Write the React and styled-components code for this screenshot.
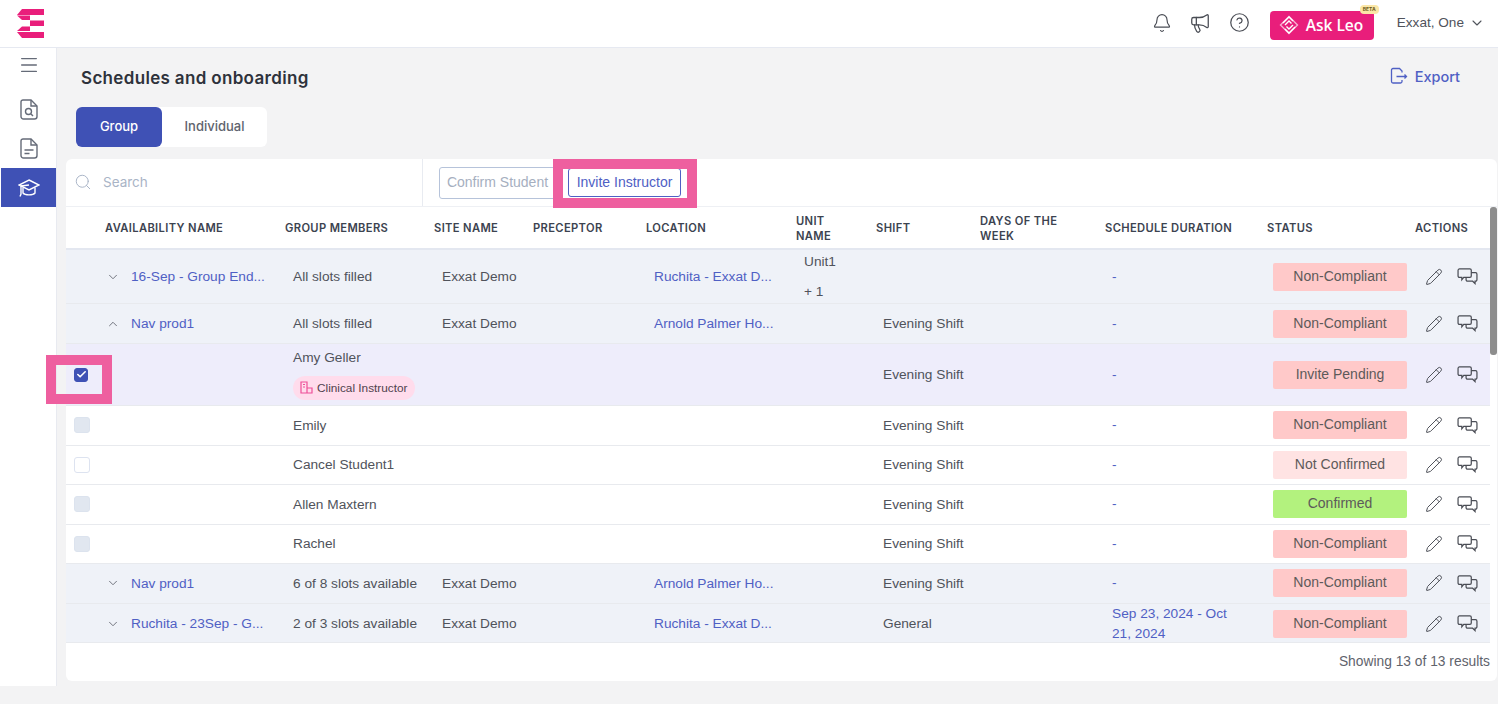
import React from "react";
import styled, { createGlobalStyle } from "styled-components";
import {
  Bell,
  ChevronDown,
  ChevronUp,
  CircleHelp,
  Megaphone,
  Menu,
  Pencil,
  Search,
  Check,
} from "lucide-react";

const GlobalStyle = createGlobalStyle`
  html, body {
    margin: 0;
    padding: 0;
    background: #f3f3f4;
    font-family: "Liberation Sans", Arial, sans-serif;
  }
  * { box-sizing: border-box; }
`;

const GRID = "211px 149px 99px 113px 150px 80px 104px 125px 162px 148px 83px";
const LINK = "#4f60c4";

const Page = styled.div`
  width: 1498px;
  height: 704px;
  overflow: hidden;
  position: relative;
`;

const TopBar = styled.header`
  height: 48px;
  background: #fff;
  border-bottom: 1px solid #e6e9f1;
  display: flex;
  align-items: center;
  padding: 0 13px 0 17px;
`;

const TopRight = styled.div`
  margin-left: auto;
  display: flex;
  align-items: center;
  color: #4a4d55;
`;

const IconSlot = styled.span`
  display: flex;
  margin-right: ${(p) => p.$gap}px;
  margin-bottom: 2px;
`;

const AskLeo = styled.div`
  position: relative;
  width: 104px;
  height: 29px;
  margin-top: 3px;
  background: #e91e7b;
  border-radius: 4px;
  color: #fff;
  display: flex;
  align-items: center;
  padding-left: 9px;
  gap: 7px;
  font-family: "Open Sans", sans-serif;
  font-weight: 600;
  font-size: 15.5px;
  margin-right: 23px;
`;

const Beta = styled.span`
  position: absolute;
  top: -6px;
  right: -5px;
  height: 9px;
  padding: 0 3px;
  background: #fbe7a6;
  border-radius: 4px;
  color: #6b5a20;
  font-size: 5px;
  line-height: 9px;
  font-weight: 700;
  font-family: "Inter", sans-serif;
`;

const UserName = styled.div`
  display: flex;
  align-items: center;
  gap: 5px;
  font-size: 13.6px;
  color: #50535b;
  margin-bottom: 2px;
`;

const Body = styled.div`
  display: flex;
  height: 638px;
`;

const Sidebar = styled.nav`
  width: 57px;
  background: #fff;
  border-right: 1px solid #e8eaf0;
  padding: 0 0 0 1px;
  display: flex;
  flex-direction: column;
`;

const SideItem = styled.div`
  height: ${(p) => p.$h || 39}px;
  display: flex;
  align-items: center;
  justify-content: center;
  color: ${(p) => (p.$active ? "#fff" : "#656b78")};
  background: ${(p) => (p.$active ? "#3f51b5" : "transparent")};
  margin-bottom: ${(p) => p.$mb || 0}px;
`;

const Main = styled.main`
  flex: 1;
  padding: 0 0 5px 9px;
  display: flex;
  flex-direction: column;
  min-width: 0;
`;

const HeadRow = styled.div`
  height: 59px;
  display: flex;
  align-items: center;
  padding: 1px 38px 0 15px;
`;

const Title = styled.h1`
  margin: 0;
  font-family: "Inter", sans-serif;
  font-weight: 600;
  font-size: 17px;
  letter-spacing: 0.33px;
  color: #2e323b;
`;

const ExportLink = styled.div`
  margin-left: auto;
  margin-bottom: 4px;
  display: flex;
  align-items: center;
  gap: 7px;
  color: ${LINK};
  font-family: "Inter", sans-serif;
  font-weight: 500;
  font-size: 14.5px;
`;

const Tabs = styled.div`
  margin-left: 10px;
  width: 191px;
  height: 40px;
  background: #fff;
  border-radius: 6px;
  display: flex;
  font-family: "Inter", sans-serif;
  font-size: 13px;
`;

const Tab = styled.div`
  width: ${(p) => (p.$active ? 86 : 105)}px;
  display: flex;
  align-items: center;
  justify-content: center;
  padding-bottom: 2px;
  border-radius: 6px;
  font-weight: 500;
  color: ${(p) => (p.$active ? "#fff" : "#60646e")};
  background: ${(p) => (p.$active ? "#3f51b5" : "transparent")};
`;

const Card = styled.section`
  margin-top: 12px;
  flex: 1;
  background: #fff;
  border-radius: 6px;
  margin-right: 1px;
  position: relative;
  overflow: hidden;
  display: flex;
  flex-direction: column;
`;

const Toolbar = styled.div`
  height: 48px;
  display: flex;
  align-items: stretch;
  border-bottom: 1px solid #eef0f4;
`;

const SearchBox = styled.div`
  width: 357px;
  border-right: 1px solid #e8ebf1;
  display: flex;
  align-items: center;
  padding: 0 0 2px 8px;
  gap: 11px;
  color: #a9b4c6;
  font-family: "Inter", sans-serif;
  font-size: 13.5px;
`;

const Actions = styled.div`
  display: flex;
  align-items: center;
  padding-left: 16px;
  gap: 12px;
`;

const OutlineButton = styled.div`
  height: ${(p) => (p.$active ? 29 : 32)}px;
  width: ${(p) => (p.$active ? 113 : 117)}px;
  border: 1px solid ${(p) => (p.$active ? "#4f60c4" : "#b6c3da")};
  border-radius: 3px;
  display: flex;
  align-items: center;
  justify-content: center;
  padding-bottom: 2px;
  font-size: 14px;
  background: #fff;
  color: ${(p) => (p.$active ? LINK : "#a6afbf")};
`;

const Highlight = styled.div`
  position: absolute;
  left: ${(p) => p.$x}px;
  top: ${(p) => p.$y}px;
  width: ${(p) => p.$w}px;
  height: ${(p) => p.$h}px;
  border: 10px solid #ee5f9f;
  pointer-events: none;
  z-index: 3;
`;

const HeaderRow = styled.div`
  display: grid;
  grid-template-columns: ${GRID};
  width: 1424px;
  height: 43px;
  padding-top: 2px;
  align-items: center;
  border-bottom: 2px solid #e3e7f0;
  font-family: "Inter", sans-serif;
  font-size: 11.2px;
  font-weight: 600;
  line-height: 15px;
  letter-spacing: 0.35px;
  color: #3c4350;
`;

const HeadCell = styled.div`
  padding: 0 16px 0 ${(p) => p.$pl || 8}px;
  text-transform: uppercase;
`;

const Row = styled.div`
  display: grid;
  grid-template-columns: ${GRID};
  width: 1424px;
  height: ${(p) => p.$h}px;
  align-items: center;
  font-size: 13.7px;
  color: #50535b;
  background: ${(p) =>
    p.$kind === "group" ? "#eff2f8" : p.$kind === "selected" ? "#eeedfb" : "#fff"};
  border-bottom: 1px solid #e8eaee;
`;

const Cell = styled.div`
  padding-left: ${(p) => p.$pl || 16}px;
  min-width: 0;
`;

const LinkText = styled.div`
  color: ${LINK};
  white-space: nowrap;
`;

const NameCell = styled.div`
  display: flex;
  align-items: center;
  padding-left: 40px;
  gap: 11px;
  color: #60646e;
  min-width: 0;

  svg {
    flex-shrink: 0;
  }
`;

const Box = styled.span`
  width: ${(p) => (p.$state === "checked" ? 14 : 16)}px;
  height: ${(p) => (p.$state === "checked" ? 14 : 16)}px;
  margin-left: 8px;
  display: flex;
  align-items: center;
  justify-content: center;
  border-radius: 3px;
  color: #fff;
  border: 1px solid
    ${(p) => (p.$state === "checked" ? "#3f51b5" : p.$state === "empty" ? "#dde3f0" : "#dce3ee")};
  background: ${(p) =>
    p.$state === "checked" ? "#3f51b5" : p.$state === "empty" ? "#fff" : "#e1e7f0"};
`;

const Member = styled.div`
  display: flex;
  flex-direction: column;
  align-items: flex-start;
  gap: 11px;
  white-space: nowrap;
`;

const RolePill = styled.span`
  height: 24px;
  width: 122px;
  display: flex;
  align-items: center;
  gap: 4px;
  padding-left: 7px;
  border-radius: 12px;
  background: #ffdcec;
  color: #50424c;
  font-size: 11.8px;
`;

const UnitStack = styled.div`
  display: flex;
  flex-direction: column;
  gap: 14px;
  line-height: 16px;
`;

const Schedule = styled.div`
  color: ${LINK};
  line-height: 20px;
  padding-right: 22px;
`;

const StatusCell = styled.div`
  padding-left: 14px;
`;

const Status = styled.div`
  width: 134px;
  height: 28px;
  display: flex;
  align-items: center;
  justify-content: center;
  padding-bottom: 2px;
  font-size: 14px;
  border-radius: 2px;
  color: #5d5a5a;
  background: ${(p) =>
    p.$tone === "ok" ? "#b3f27e" : p.$tone === "soft" ? "#ffe3e3" : "#ffc9c9"};
`;

const ActionCell = styled.div`
  display: flex;
  align-items: center;
  padding-left: 18px;
  gap: 14px;
  color: #4a4d55;
`;

const Footer = styled.div`
  width: 1424px;
  flex: 1;
  display: flex;
  align-items: center;
  justify-content: flex-end;
  font-size: 13.8px;
  color: #5f636c;
  padding-bottom: 2px;
`;

const ScrollThumb = styled.div`
  position: absolute;
  right: 0;
  top: 48px;
  width: 7px;
  height: 148px;
  border-radius: 3px;
  background: #8d8d8d;
`;

const BottomStrip = styled.div`
  height: 18px;
  background: #f3f3f4;
`;

const Logo = () => (
  <svg width="27" height="29" viewBox="0 0 27 29" fill="#e91e7b">
    <polygon points="5,0 27,0 27,6 0,6" />
    <polygon points="0,6.5 13,6.5 13,11 5,11" />
    <polygon points="13,11.5 27,11.5 27,17 13,17" />
    <polygon points="5,17.5 13,17.5 13,22 0,22" />
    <polygon points="0,23 27,23 27,29 5,29" />
  </svg>
);

const LeoIcon = () => (
  <svg width="20" height="20" viewBox="0 0 20 20" fill="none" stroke="#fff" strokeWidth="1.4">
    <path d="M10 1.5 18.5 10 10 18.5 1.5 10Z" strokeOpacity=".65" />
    <path d="M6 10 10 6l2.5 2.5M14 10l-4 4-2.5-2.5" />
    <path d="M4 8 10 2l4 4M16 12l-6 6-4-4" />
  </svg>
);

const ExportIcon = () => (
  <svg width="18" height="18" viewBox="0 0 18 18" fill="none" stroke={LINK} strokeWidth="1.3">
    <path d="M12 5.5V4L9.5 1.5H3A1.5 1.5 0 0 0 1.5 3v11.5A1.5 1.5 0 0 0 3 16h7.5A1.5 1.5 0 0 0 12 14.5V13" />
    <path d="M6.5 9.5h10M14.5 7.5l2 2-2 2" />
  </svg>
);

const DocSearchIcon = () => (
  <svg width="18" height="21" viewBox="0 0 18 21" fill="none" stroke="currentColor" strokeWidth="1.4">
    <path d="M3 1h8l6 6v10.5A2.5 2.5 0 0 1 14.5 20h-11A2.5 2.5 0 0 1 1 17.5V3a2 2 0 0 1 2-2Z" />
    <path d="M11 1v6h6" />
    <circle cx="8.5" cy="12.5" r="3" />
    <path d="m11 15 2 2" />
  </svg>
);

const DocLinesIcon = () => (
  <svg width="18" height="21" viewBox="0 0 18 21" fill="none" stroke="currentColor" strokeWidth="1.4">
    <path d="M3 1h8l6 6v10.5A2.5 2.5 0 0 1 14.5 20h-11A2.5 2.5 0 0 1 1 17.5V3a2 2 0 0 1 2-2Z" />
    <path d="M11 1v6h6" />
    <path d="M4.5 12h9M4.5 15.5h5" />
  </svg>
);

const CapIcon = () => (
  <svg width="22" height="20" viewBox="0 0 22 20" fill="none" stroke="currentColor" strokeWidth="1.4">
    <path d="M11 2 21 7l-10 5L1 7Z" />
    <path d="M5 9.5V15c2 2.5 10 2.5 12 0V9.5" />
    <path d="M3 8v8l-1 2.5M11 7 3 8" />
  </svg>
);

const ChatIcon = () => (
  <svg width="21" height="17" viewBox="0 0 22 18" fill="none" stroke="currentColor" strokeWidth="1.3">
    <path d="M2.5 1h11A1.5 1.5 0 0 1 15 2.5v6a1.5 1.5 0 0 1-1.5 1.5H7l-2 2.5V10H2.5A1.5 1.5 0 0 1 1 8.5v-6A1.5 1.5 0 0 1 2.5 1Z" />
    <path d="M15 5h4.5A1.5 1.5 0 0 1 21 6.5v6a1.5 1.5 0 0 1-1.5 1.5H19v2.5L16.5 14H11a1.5 1.5 0 0 1-1.5-1.5V10" />
  </svg>
);

const RoleIcon = () => (
  <svg width="13" height="13" viewBox="0 0 13 13" fill="none" stroke="#ee4f98" strokeWidth="1.2">
    <path d="M1 1h6v11H1ZM7 7h5v5H7ZM3 3.500h2M3 6h2" />
  </svg>
);

const rows = [
  { kind: "group", h: 54, open: false, name: "16-Sep - Group End...", members: "All slots filled", site: "Exxat Demo", location: "Ruchita - Exxat D...", unit: true, status: "Non-Compliant" },
  { kind: "group", h: 40, open: true, name: "Nav prod1", members: "All slots filled", site: "Exxat Demo", location: "Arnold Palmer Ho...", shift: "Evening Shift", status: "Non-Compliant" },
  { kind: "selected", h: 62, box: "checked", member: "Amy Geller", role: true, shift: "Evening Shift", status: "Invite Pending" },
  { kind: "child", h: 39.5, box: "muted", member: "Emily", shift: "Evening Shift", status: "Non-Compliant" },
  { kind: "child", h: 39.5, box: "empty", member: "Cancel Student1", shift: "Evening Shift", status: "Not Confirmed", tone: "soft" },
  { kind: "child", h: 39.5, box: "muted", member: "Allen Maxtern", shift: "Evening Shift", status: "Confirmed", tone: "ok" },
  { kind: "child", h: 39.5, box: "muted", member: "Rachel", shift: "Evening Shift", status: "Non-Compliant" },
  { kind: "group", h: 39.5, open: false, name: "Nav prod1", members: "6 of 8 slots available", site: "Exxat Demo", location: "Arnold Palmer Ho...", shift: "Evening Shift", status: "Non-Compliant" },
  { kind: "group", h: 39.5, open: false, name: "Ruchita - 23Sep - G...", members: "2 of 3 slots available", site: "Exxat Demo", location: "Ruchita - Exxat D...", shift: "General", schedule: "Sep 23, 2024 - Oct 21, 2024", status: "Non-Compliant" },
];

const columns = [
  { label: "Availability name", pl: 39 },
  { label: "Group members" },
  { label: "Site name" },
  { label: "Preceptor" },
  { label: "Location" },
  { label: "Unit name" },
  { label: "Shift" },
  { label: "Days of the week" },
  { label: "Schedule duration" },
  { label: "Status" },
  { label: "Actions" },
];

const App = () => {
  return (
    <Page>
      <GlobalStyle />
      <TopBar>
        <Logo />
        <TopRight>
          <IconSlot $gap={17}><Bell size={20} strokeWidth={1.4} /></IconSlot>
          <IconSlot $gap={18}><Megaphone size={22} strokeWidth={1.4} /></IconSlot>
          <IconSlot $gap={20}><CircleHelp size={21} strokeWidth={1.4} /></IconSlot>
          <AskLeo>
            <LeoIcon />
            Ask Leo
            <Beta>BETA</Beta>
          </AskLeo>
          <UserName>
            Exxat, One
            <ChevronDown size={16} strokeWidth={1.6} />
          </UserName>
        </TopRight>
      </TopBar>
      <Body>
        <Sidebar>
          <SideItem $h={33} $mb={9}><Menu size={22} strokeWidth={1.5} /></SideItem>
          <SideItem><DocSearchIcon /></SideItem>
          <SideItem><DocLinesIcon /></SideItem>
          <SideItem $active><CapIcon /></SideItem>
        </Sidebar>
        <Main>
          <HeadRow>
            <Title>Schedules and onboarding</Title>
            <ExportLink>
              <ExportIcon />
              Export
            </ExportLink>
          </HeadRow>
          <Tabs>
            <Tab $active>Group</Tab>
            <Tab>Individual</Tab>
          </Tabs>
          <Card>
            <Toolbar>
              <SearchBox>
                <Search size={18} strokeWidth={1.3} />
                Search
              </SearchBox>
              <Actions>
                <OutlineButton>Confirm Student</OutlineButton>
                <OutlineButton $active>Invite Instructor</OutlineButton>
              </Actions>
            </Toolbar>
            <HeaderRow>
              {columns.map((col) => (
                <HeadCell key={col.label} $pl={col.pl}>{col.label}</HeadCell>
              ))}
            </HeaderRow>
            {rows.map((row, index) => (
              <Row key={index} $kind={row.kind} $h={row.h}>
                {row.name ? (
                  <NameCell>
                    {row.open ? (
                      <ChevronUp size={14} strokeWidth={1.5} />
                    ) : (
                      <ChevronDown size={14} strokeWidth={1.5} />
                    )}
                    <LinkText>{row.name}</LinkText>
                  </NameCell>
                ) : (
                  <div>
                    <Box $state={row.box}>
                      {row.box === "checked" && <Check size={11} strokeWidth={3.5} />}
                    </Box>
                  </div>
                )}
                <Cell>
                  {row.member ? (
                    <Member>
                      {row.member}
                      {row.role && (
                        <RolePill>
                          <RoleIcon />
                          Clinical Instructor
                        </RolePill>
                      )}
                    </Member>
                  ) : (
                    row.members
                  )}
                </Cell>
                <Cell>{row.site}</Cell>
                <Cell />
                <Cell>{row.location && <LinkText>{row.location}</LinkText>}</Cell>
                <Cell>
                  {row.unit && (
                    <UnitStack>
                      <span>Unit1</span>
                      <span>+ 1</span>
                    </UnitStack>
                  )}
                </Cell>
                <Cell $pl={15}>{row.shift}</Cell>
                <Cell />
                <Cell $pl={15}>
                  <Schedule>{row.schedule || "-"}</Schedule>
                </Cell>
                <StatusCell>
                  <Status $tone={row.tone}>{row.status}</Status>
                </StatusCell>
                <ActionCell>
                  <Pencil size={18} strokeWidth={1.3} />
                  <ChatIcon />
                </ActionCell>
              </Row>
            ))}
            <Footer>Showing 13 of 13 results</Footer>
            <ScrollThumb />
            <Highlight $x={487} $y={0} $w={144} $h={49} />
          </Card>
        </Main>
      </Body>
      <BottomStrip />
      <Highlight $x={46} $y={355} $w={66} $h={49} />
    </Page>
  );
};

export default App;
